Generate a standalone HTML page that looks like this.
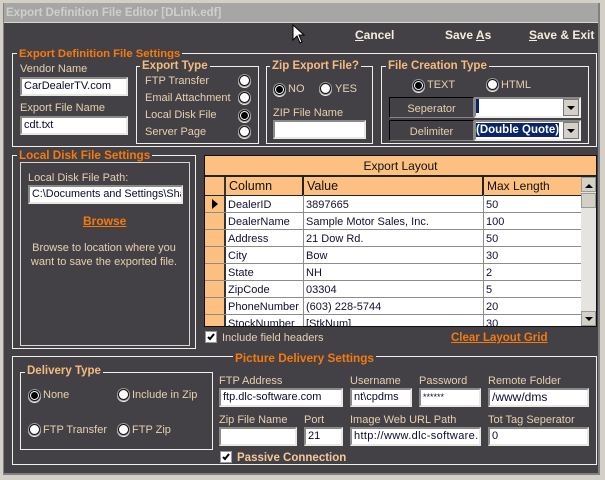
<!DOCTYPE html>
<html><head><meta charset="utf-8"><style>
html,body{margin:0;padding:0;background:#d4d0c8}
#w{position:relative;width:605px;height:480px;overflow:hidden;background:#434145;font:11px "Liberation Sans",sans-serif;color:#f4c89a}
#w div{position:absolute;box-sizing:border-box}
.t{white-space:nowrap;line-height:14px}
.b{border:1px solid #f0f0ea}
.g{color:#f4bb80;font-weight:bold;font-size:11.5px;background:#434145;padding:0 2px}
.o{color:#f57a10;font-weight:bold;font-size:11.7px;background:#434145;padding:0 2px;margin-top:1px;height:13px}
.i{background:#fff;border:2px solid;border-color:#8a8a88 #e8e8e2 #e8e8e2 #8a8a88;color:#0a0a30;font-size:11px;line-height:15px;padding-left:2px;white-space:nowrap;overflow:hidden}
.r{width:11px;height:11px;border-radius:50%;background:#fff;border:1px solid #111;box-shadow:0 0 0 1px #9a9a9a,0 1px 0 1px #eee}
.r.c:after{content:"";position:absolute;left:1px;top:1px;width:7px;height:7px;border-radius:50%;background:#000}
.l{color:#e8d0b0;margin-top:1px}
.m{color:#f4ecdc;font-size:12px;font-weight:bold}
.m u{text-decoration:underline}
.gl{background:#8c8c8c}
.s{background:#fcc080}
.c{color:#101030;margin-top:1px}
.cb{width:12px;height:12px;background:#fff;border:1px solid #999}
</style></head><body><div id="w">
<div style="left:0;top:0;width:605px;height:3px;background:#d4d0c8"></div>
<div style="left:0;top:0;width:3px;height:480px;background:#d4d0c8"></div>
<div style="left:3px;top:3px;width:1px;height:471px;background:#808080"></div>
<div style="left:600px;top:0;width:5px;height:480px;background:#d4d0c8"></div>
<div style="left:598px;top:3px;width:2px;height:472px;background:#808080"></div>
<div style="left:0;top:475px;width:605px;height:5px;background:#d4d0c8"></div>
<div style="left:3px;top:473px;width:597px;height:2px;background:#808080"></div>
<div style="left:4px;top:3px;width:594px;height:19px;background:#a6a6a4"></div>
<div style="left:4px;top:22px;width:594px;height:1px;background:#d8d8d0"></div>
<div class="t" style="left:6px;top:6px;color:#cfcfcb;font-weight:bold;font-size:11.5px">Export Definition File Editor [DLink.edf]</div>
<svg style="position:absolute;left:292px;top:24px" width="14" height="20"><path d="M1 1V16L5 12L8 19L10 18L7 11H12Z" fill="#fff" stroke="#000"/></svg>
<div class="t m" style="left:355px;top:28px"><u>C</u>ancel</div>
<div class="t m" style="left:445px;top:28px">Save <u>A</u>s</div>
<div class="t m" style="left:529px;top:28px"><u>S</u>ave &amp; Exit</div>

<div class="b" style="left:12px;top:53px;width:585px;height:94px"></div>
<div class="t o" style="left:17px;top:46px;font-size:11.3px">Export Definition File Settings</div>
<div class="t l" style="left:20px;top:61px">Vendor Name</div>
<div class="i" style="left:20px;top:77px;width:108px;height:19px">CarDealerTV.com</div>
<div class="t l" style="left:20px;top:100px">Export File Name</div>
<div class="i" style="left:20px;top:116px;width:108px;height:19px">cdt.txt</div>

<div class="b" style="left:136px;top:66px;width:123px;height:78px"></div>
<div class="t g" style="left:140px;top:59px">Export Type</div>
<div class="t l" style="left:145px;top:73px">FTP Transfer</div>
<div class="t l" style="left:145px;top:90px">Email Attachment</div>
<div class="t l" style="left:145px;top:107px">Local Disk File</div>
<div class="t l" style="left:145px;top:124px">Server Page</div>
<div class="r" style="left:239px;top:75px"></div>
<div class="r" style="left:239px;top:92px"></div>
<div class="r c" style="left:239px;top:109px"></div>
<div class="r" style="left:239px;top:126px"></div>

<div class="b" style="left:266px;top:66px;width:107px;height:78px"></div>
<div class="t g" style="left:270px;top:59px">Zip Export File?</div>
<div class="r c" style="left:274px;top:83px"></div>
<div class="t l" style="left:288px;top:81px">NO</div>
<div class="r" style="left:320px;top:83px"></div>
<div class="t l" style="left:335px;top:81px">YES</div>
<div class="t l" style="left:273px;top:105px">ZIP File Name</div>
<div class="i" style="left:273px;top:120px;width:93px;height:19px"></div>

<div class="b" style="left:381px;top:66px;width:208px;height:78px"></div>
<div class="t g" style="left:386px;top:59px">File Creation Type</div>
<div class="r c" style="left:413px;top:79px"></div>
<div class="t l" style="left:427px;top:77px">TEXT</div>
<div class="r" style="left:487px;top:79px"></div>
<div class="t l" style="left:501px;top:77px">HTML</div>
<div style="left:389px;top:97px;width:85px;height:21px;border:1px solid;border-color:#000 #888 #888 #000;background:#434145"></div>
<div class="t l" style="left:389px;top:101px;width:85px;text-align:center">Seperator</div>
<div style="left:389px;top:120px;width:85px;height:21px;border:1px solid;border-color:#000 #888 #888 #000;background:#434145"></div>
<div class="t l" style="left:389px;top:124px;width:85px;text-align:center">Delimiter</div>
<div style="left:474px;top:97px;width:107px;height:21px;background:#fff;border:2px solid #8a8a88;border-right-color:#eee;border-bottom-color:#eee"></div>
<div style="left:476px;top:99px;width:3px;height:14px;background:#0a246a"></div>
<div style="left:474px;top:120px;width:107px;height:21px;background:#fff;border:2px solid #8a8a88;border-right-color:#eee;border-bottom-color:#eee"></div>
<div class="t" style="left:476px;top:123px;height:14px;background:#0a246a;color:#fff;font-weight:bold;font-size:11.5px">(Double Quote)</div>
<div style="left:563px;top:99px;width:16px;height:17px;background:#d4d0c8;border:1px solid #777"></div>
<div style="left:567px;top:106px;border:4px solid transparent;border-top:4px solid #000"></div>
<div style="left:563px;top:122px;width:16px;height:17px;background:#d4d0c8;border:1px solid #777"></div>
<div style="left:567px;top:129px;border:4px solid transparent;border-top:4px solid #000"></div>

<div class="b" style="left:12px;top:155px;width:184px;height:194px"></div>
<div class="t o" style="left:17px;top:148px">Local Disk File Settings</div>
<div class="b" style="left:20px;top:162px;width:170px;height:184px;border-color:#d8d8d0"></div>
<div class="t l" style="left:28px;top:170px">Local Disk File Path:</div>
<div class="i" style="left:28px;top:185px;width:155px;height:19px;font-size:10.8px">C:\Documents and Settings\Sha</div>
<div class="t" style="left:83px;top:214px;color:#f57a10;font-weight:bold;font-size:12px;text-decoration:underline">Browse</div>
<div class="t l" style="left:20px;top:240px;width:168px;text-align:center">Browse to location where you</div>
<div class="t l" style="left:20px;top:254px;width:168px;text-align:center">want to save the exported file.</div>

<div style="left:204px;top:155px;width:393px;height:172px;background:#fff;border:1px solid #111;overflow:hidden">
 <div class="s" style="left:0;top:0;width:391px;height:19px"></div>
 <div class="t" style="left:0;top:3px;width:391px;text-align:center;color:#101010;font-size:12px">Export Layout</div>
 <div style="left:0;top:19px;width:391px;height:2px;background:#222"></div>
 <div class="s" style="left:0;top:21px;width:376px;height:18px"></div>
 <div class="s" style="left:0;top:21px;width:19px;height:150px"></div>
 <div style="left:19px;top:21px;width:2px;height:150px;background:#333"></div>
 <div style="left:97px;top:21px;width:2px;height:18px;background:#222"></div>
 <div style="left:277px;top:21px;width:2px;height:18px;background:#222"></div>
 <div style="left:0;top:39px;width:376px;height:1px;background:#222"></div>
 <div class="t" style="left:24px;top:23px;color:#101010;font-size:12.5px">Column</div>
 <div class="t" style="left:102px;top:23px;color:#101010;font-size:12.5px">Value</div>
 <div class="t" style="left:282px;top:23px;color:#101010;font-size:12px">Max Length</div>
 <div class="gl" style="left:98px;top:39px;width:1px;height:132px"></div>
 <div class="gl" style="left:278px;top:39px;width:1px;height:132px"></div>
 <div class="gl" style="left:0;top:56px;width:376px;height:1px"></div>
 <div class="gl" style="left:0;top:73px;width:376px;height:1px"></div>
 <div class="gl" style="left:0;top:90px;width:376px;height:1px"></div>
 <div class="gl" style="left:0;top:107px;width:376px;height:1px"></div>
 <div class="gl" style="left:0;top:124px;width:376px;height:1px"></div>
 <div class="gl" style="left:0;top:141px;width:376px;height:1px"></div>
 <div class="gl" style="left:0;top:158px;width:376px;height:1px"></div>
 <div style="left:7px;top:43px;border:5px solid transparent;border-left:6px solid #000;border-right:0"></div>
 <div class="t c" style="left:23px;top:41px">DealerID</div><div class="t c" style="left:101px;top:41px">3897665</div><div class="t c" style="left:281px;top:41px">50</div>
 <div class="t c" style="left:23px;top:58px">DealerName</div><div class="t c" style="left:101px;top:58px">Sample Motor Sales, Inc.</div><div class="t c" style="left:281px;top:58px">100</div>
 <div class="t c" style="left:23px;top:75px">Address</div><div class="t c" style="left:101px;top:75px">21 Dow Rd.</div><div class="t c" style="left:281px;top:75px">50</div>
 <div class="t c" style="left:23px;top:92px">City</div><div class="t c" style="left:101px;top:92px">Bow</div><div class="t c" style="left:281px;top:92px">30</div>
 <div class="t c" style="left:23px;top:109px">State</div><div class="t c" style="left:101px;top:109px">NH</div><div class="t c" style="left:281px;top:109px">2</div>
 <div class="t c" style="left:23px;top:126px">ZipCode</div><div class="t c" style="left:101px;top:126px">03304</div><div class="t c" style="left:281px;top:126px">5</div>
 <div class="t c" style="left:23px;top:143px">PhoneNumber</div><div class="t c" style="left:101px;top:143px">(603) 228-5744</div><div class="t c" style="left:281px;top:143px">20</div>
 <div class="t c" style="left:23px;top:160px">StockNumber</div><div class="t c" style="left:101px;top:160px">[StkNum]</div><div class="t c" style="left:281px;top:160px">30</div>
 <div style="left:376px;top:21px;width:15px;height:149px;background:#e6e4e0"></div>
 <div style="left:376px;top:21px;width:15px;height:15px;background:#d4d0c8;border:1px solid #999"></div>
 <div style="left:380px;top:24px;border:4px solid transparent;border-bottom:4px solid #000"></div>
 <div style="left:376px;top:37px;width:15px;height:15px;background:#d4d0c8;border:1px solid #999"></div>
 <div style="left:376px;top:155px;width:15px;height:15px;background:#d4d0c8;border:1px solid #999"></div>
 <div style="left:380px;top:161px;border:4px solid transparent;border-top:4px solid #000"></div>
</div>

<div class="cb" style="left:205px;top:331px"></div>
<svg style="position:absolute;left:206px;top:332px" width="10" height="10"><path d="M2 5L4 7L8 2" fill="none" stroke="#000" stroke-width="2"/></svg>
<div class="t l" style="left:222px;top:330px">Include field headers</div>
<div class="t" style="left:451px;top:331px;color:#f57a10;font-weight:bold;font-size:11.5px;text-decoration:underline">Clear Layout Grid</div>

<div class="b" style="left:12px;top:356px;width:585px;height:109px"></div>
<div class="t o" style="left:233px;top:350px;font-size:11.8px">Picture Delivery Settings</div>
<div class="b" style="left:20px;top:372px;width:193px;height:78px"></div>
<div class="t g" style="left:25px;top:364px">Delivery Type</div>
<div class="r c" style="left:29px;top:389px"></div><div class="t l" style="left:43px;top:387px">None</div>
<div class="r" style="left:118px;top:389px"></div><div class="t l" style="left:132px;top:387px">Include in Zip</div>
<div class="r" style="left:29px;top:424px"></div><div class="t l" style="left:43px;top:422px">FTP Transfer</div>
<div class="r" style="left:118px;top:424px"></div><div class="t l" style="left:132px;top:422px">FTP Zip</div>

<div class="t l" style="left:219px;top:373px">FTP Address</div>
<div class="i" style="left:219px;top:388px;width:124px;height:19px">ftp.dlc-software.com</div>
<div class="t l" style="left:350px;top:373px">Username</div>
<div class="i" style="left:350px;top:388px;width:62px;height:19px">nt\cpdms</div>
<div class="t l" style="left:419px;top:373px">Password</div>
<div class="i" style="left:419px;top:388px;width:62px;height:19px;font-size:9px">******</div>
<div class="t l" style="left:488px;top:373px">Remote Folder</div>
<div class="i" style="left:488px;top:388px;width:101px;height:19px;font-size:12px">/www/dms</div>
<div class="t l" style="left:219px;top:412px">Zip File Name</div>
<div class="i" style="left:219px;top:427px;width:78px;height:19px"></div>
<div class="t l" style="left:304px;top:412px">Port</div>
<div class="i" style="left:304px;top:427px;width:39px;height:19px">21</div>
<div class="t l" style="left:350px;top:412px">Image Web URL Path</div>
<div class="i" style="left:350px;top:427px;width:131px;height:19px;letter-spacing:.35px">http://www.dlc-software.</div>
<div class="t l" style="left:488px;top:412px">Tot Tag Seperator</div>
<div class="i" style="left:488px;top:427px;width:101px;height:19px">0</div>
<div class="cb" style="left:220px;top:451px"></div>
<svg style="position:absolute;left:221px;top:452px" width="10" height="10"><path d="M2 5L4 7L8 2" fill="none" stroke="#000" stroke-width="2"/></svg>
<div class="t" style="left:237px;top:451px;color:#f4c89a;font-weight:bold;font-size:11.5px">Passive Connection</div>
</div></body></html>
